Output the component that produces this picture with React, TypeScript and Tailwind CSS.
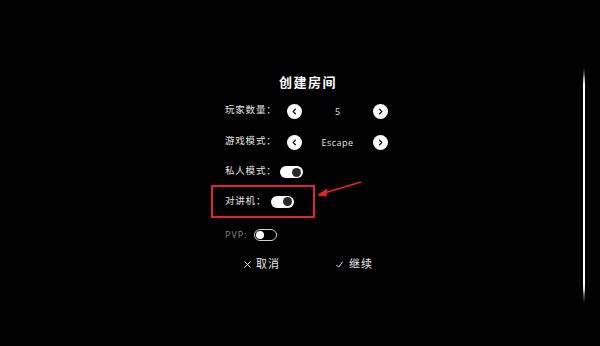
import React from "react";

const cjk = { fontFamily: '"Noto Sans CJK SC", "Noto Sans", sans-serif' };

function Circle({ dir }: { dir: "l" | "r" }) {
  return (
    <div className="w-[15px] h-[15px] rounded-full bg-white flex items-center justify-center">
      <svg width="7" height="7" viewBox="0 0 8 8">
        {dir === "l" ? (
          <path d="M5 1.5 L2.5 4 L5 6.5" stroke="#111" strokeWidth="1.5" fill="none" strokeLinecap="round" strokeLinejoin="round" />
        ) : (
          <path d="M3 1.5 L5.5 4 L3 6.5" stroke="#111" strokeWidth="1.5" fill="none" strokeLinecap="round" strokeLinejoin="round" />
        )}
      </svg>
    </div>
  );
}

function ToggleOn() {
  return (
    <div className="w-[23px] h-[12px] rounded-full bg-white flex items-center justify-end pr-[2px]">
      <div className="w-[9px] h-[9px] rounded-full bg-[#2a2a2a]" />
    </div>
  );
}

function ToggleOff() {
  return (
    <div className="w-[23px] h-[12px] rounded-full border border-[#d0d0d0] bg-black flex items-center justify-start pl-[1px]">
      <div className="w-[8px] h-[8px] rounded-full bg-white" />
    </div>
  );
}

function Label({ children }: { children: React.ReactNode }) {
  return (
    <span className="block pb-[2px] text-[9.5px] tracking-[0.8px] text-[#e6e6e6] leading-none" style={cjk}>
      {children}
    </span>
  );
}

export default function App() {
  return (
    <div className="w-[600px] h-[346px] bg-black relative overflow-hidden" style={cjk}>
      <div className="flex flex-col pt-[72px]">
        <div className="ml-[225px] w-[166px] h-[18px] flex items-center justify-center">
          <span className="text-[13px] font-bold tracking-[1.5px] text-white leading-none">创建房间</span>
        </div>
        <div className="ml-[225px] h-[20px] mt-[11px] flex items-center">
          <div className="w-[62px]"><Label>玩家数量：</Label></div>
          <Circle dir="l" />
          <div className="w-[71px] flex justify-center">
            <span className="text-[9px] text-[#e6e6e6] leading-none" style={{ fontFamily: '"Open Sans", sans-serif' }}>5</span>
          </div>
          <Circle dir="r" />
        </div>
        <div className="ml-[225px] h-[20px] mt-[11px] flex items-center">
          <div className="w-[62px]"><Label>游戏模式：</Label></div>
          <Circle dir="l" />
          <div className="w-[71px] flex justify-center">
            <span className="text-[9px] tracking-[0.5px] text-[#e6e6e6] leading-none" style={{ fontFamily: '"Open Sans", sans-serif' }}>Escape</span>
          </div>
          <Circle dir="r" />
        </div>
        <div className="ml-[225px] h-[20px] mt-[10px] flex items-center">
          <div className="w-[55px]"><Label>私人模式：</Label></div>
          <ToggleOn />
        </div>
        <div className="ml-[211px] mt-[3px] w-[104px] h-[33px] border-2 border-[#e0262a] pl-[12px] flex items-center">
          <div className="w-[46px]"><Label>对讲机：</Label></div>
          <ToggleOn />
        </div>
        <div className="ml-[225px] h-[20px] mt-[7px] flex items-center">
          <div className="w-[29px]">
            <span className="block pb-[1px] text-[9px] tracking-[1px] text-[#8a8a8a] leading-none" style={{ fontFamily: '"Open Sans", sans-serif' }}>PVP:</span>
          </div>
          <ToggleOff />
        </div>
        <div className="h-[20px] mt-[9px] flex items-center">
          <div className="ml-[243px] flex items-center gap-[4px]">
            <svg width="9" height="9" viewBox="0 0 10 10">
              <path d="M1.5 1.5 L8.5 8.5 M8.5 1.5 L1.5 8.5" stroke="#e6e6e6" strokeWidth="1.1" />
            </svg>
            <span className="block pb-[1px] text-[11px] tracking-[1px] text-[#e6e6e6] leading-none">取消</span>
          </div>
          <div className="ml-[55px] flex items-center gap-[5px]">
            <svg width="9" height="9" viewBox="0 0 10 10">
              <path d="M1.5 5.5 L4 8 L8.5 2" stroke="#e6e6e6" strokeWidth="1.1" fill="none" />
            </svg>
            <span className="block pb-[1px] text-[11px] tracking-[1px] text-[#e6e6e6] leading-none">继续</span>
          </div>
        </div>
      </div>
      <svg className="absolute left-0 top-0" width="600" height="346" viewBox="0 0 600 346">
        <defs>
          <linearGradient id="lg" x1="0" y1="0" x2="0" y2="1">
            <stop offset="0" stopColor="#fff" stopOpacity="0.2" />
            <stop offset="0.08" stopColor="#fff" stopOpacity="1" />
            <stop offset="0.92" stopColor="#fff" stopOpacity="1" />
            <stop offset="1" stopColor="#fff" stopOpacity="0.2" />
          </linearGradient>
        </defs>
        <path d="M584 66 L585 80 L585 290 L584 304 L583 290 L583 80 Z" fill="url(#lg)" />
        <path d="M361 182 L324 193" stroke="#e8231f" strokeWidth="1.6" />
        <path d="M318 195 L327 189 L326 196 Z" fill="#e8231f" stroke="#e8231f" strokeWidth="1" />
      </svg>
    </div>
  );
}
